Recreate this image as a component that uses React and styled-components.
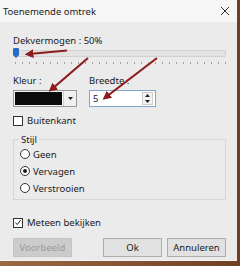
import React from "react";
import styled, { createGlobalStyle } from "styled-components";

const GlobalStyle = createGlobalStyle`
  html, body {
    margin: 0;
    padding: 0;
    background: #7c4d2e;
  }
  body {
    font-family: "Noto Sans", "Open Sans", sans-serif;
    color: #1a1a1a;
  }
`;

const ticks = Array.from({ length: 31 }, (_, i) => i);

const App = () => {
  return (
    <>
      <GlobalStyle />
      <Screen>
        <Window>
          <TitleBar>
            <Title>Toenemende omtrek</Title>
            <Close>
              <svg width="10" height="10" viewBox="0 0 10 10">
                <path d="M1 1 L9 9 M9 1 L1 9" stroke="#333" strokeWidth="1" />
              </svg>
            </Close>
          </TitleBar>
          <Body>
            <Label>Dekvermogen : 50%</Label>
            <Slider>
              <Track />
              <Thumb>
                <svg width="6" height="10" viewBox="0 0 6 10">
                  <path d="M0.5 1 Q0.5 0.5 1 0.5 L5 0.5 Q5.5 0.5 5.5 1 L5.5 7 L3 9.5 L0.5 7 Z" fill="#1e6fd0" stroke="#1456a8" strokeWidth="0.8" />
                </svg>
              </Thumb>
            </Slider>
            <Ticks>
              {ticks.map((t) => (
                <Tick key={t} />
              ))}
            </Ticks>
            <FieldRow>
              <Field>
                <Label>Kleur :</Label>
                <ColorPicker>
                  <Swatch />
                  <DropButton>
                    <svg width="5" height="3" viewBox="0 0 5 3">
                      <path d="M0 0 L5 0 L2.5 3 Z" fill="#222" />
                    </svg>
                  </DropButton>
                </ColorPicker>
              </Field>
              <Field>
                <Label>Breedte :</Label>
                <NumberBox>
                  <NumberValue>5</NumberValue>
                  <Spinner>
                    <SpinButton>
                      <svg width="5" height="3" viewBox="0 0 5 3">
                        <path d="M0 3 L5 3 L2.5 0 Z" fill="#222" />
                      </svg>
                    </SpinButton>
                    <SpinButton>
                      <svg width="5" height="3" viewBox="0 0 5 3">
                        <path d="M0 0 L5 0 L2.5 3 Z" fill="#222" />
                      </svg>
                    </SpinButton>
                  </Spinner>
                </NumberBox>
              </Field>
            </FieldRow>
            <CheckRow $top={7}>
              <CheckBox />
              <span>Buitenkant</span>
            </CheckRow>
            <Group>
              <Legend>Stijl</Legend>
              <RadioRow>
                <Radio />
                <span>Geen</span>
              </RadioRow>
              <RadioRow>
                <Radio $checked />
                <span>Vervagen</span>
              </RadioRow>
              <RadioRow>
                <Radio />
                <span>Verstrooien</span>
              </RadioRow>
            </Group>
            <CheckRow $top={16}>
              <CheckBox>
                <svg width="9" height="9" viewBox="0 0 9 9">
                  <path d="M1.5 4.5 L3.6 6.8 L7.6 1.6" fill="none" stroke="#222" strokeWidth="1.1" />
                </svg>
              </CheckBox>
              <span>Meteen bekijken</span>
            </CheckRow>
            <Buttons>
              <Button disabled>Voorbeeld</Button>
              <Spacer />
              <Button>Ok</Button>
              <Button>Annuleren</Button>
            </Buttons>
          </Body>
          <Arrows width="237" height="260" viewBox="0 0 237 260">
            <defs>
              <marker id="head" markerWidth="4" markerHeight="4" refX="2" refY="2" orient="auto" markerUnits="strokeWidth">
                <path d="M0 0 L4 2 L0 4 Z" fill="#8e1d1d" />
              </marker>
            </defs>
            <line x1="67" y1="50.5" x2="29" y2="54" stroke="#8e1d1d" strokeWidth="2.2" markerEnd="url(#head)" />
            <line x1="88" y1="58" x2="52" y2="89" stroke="#8e1d1d" strokeWidth="2.2" markerEnd="url(#head)" />
            <line x1="157" y1="58" x2="106" y2="97" stroke="#8e1d1d" strokeWidth="2.2" markerEnd="url(#head)" />
          </Arrows>
        </Window>
      </Screen>
    </>
  );
};

const Screen = styled.div`
  width: 240px;
  height: 266px;
  background: linear-gradient(90deg, #9a6a45, #6e3f22);
  overflow: hidden;
`;

const Window = styled.div`
  position: relative;
  width: 237px;
  height: 260px;
  background: #ebebeb;
  display: flex;
  flex-direction: column;
  box-shadow: 0 1px 0 #f4f4f4;
`;

const TitleBar = styled.div`
  height: 22px;
  background: #f6f6f6;
  display: flex;
  align-items: center;
  justify-content: space-between;
  padding: 0 5px 0 3px;
`;

const Title = styled.div`
  font-size: 9.5px;
  color: #222;
`;

const Close = styled.div`
  display: flex;
  width: 14px;
  justify-content: center;
`;

const Body = styled.div`
  flex: 1;
  display: flex;
  flex-direction: column;
  padding: 13px 11px 0 13px;
  font-size: 9.5px;
`;

const Label = styled.div`
  font-size: 9.5px;
  line-height: 11px;
  color: #1a1a1a;
`;

const Slider = styled.div`
  position: relative;
  height: 11px;
  margin-top: 2px;
  display: flex;
  align-items: center;
`;

const Track = styled.div`
  flex: 1;
  height: 5px;
  background: #e3e3e3;
  border: 1px solid #d2d2d2;
  border-radius: 1px;
`;

const Thumb = styled.div`
  position: absolute;
  left: 0;
  top: 0;
  display: flex;
`;

const Ticks = styled.div`
  display: flex;
  justify-content: space-between;
  padding: 0 0 0 2px;
  margin-top: 3px;
  height: 3px;
`;

const Tick = styled.div`
  width: 1px;
  height: 2px;
  background: #a0a0a0;
`;

const FieldRow = styled.div`
  display: flex;
  gap: 12px;
  margin-top: 10px;
`;

const Field = styled.div`
  display: flex;
  flex-direction: column;
  gap: 4px;
`;

const ColorPicker = styled.div`
  width: 64px;
  height: 17px;
  display: flex;
  border: 1px solid #9a9a9a;
  box-sizing: border-box;
  background: #f4f4f4;
`;

const Swatch = styled.div`
  flex: 1;
  margin: 1px;
  background: #0b0b0b;
`;

const DropButton = styled.div`
  width: 12px;
  display: flex;
  align-items: center;
  justify-content: center;
  background: #f0f0f0;
  border-left: 1px solid #cfcfcf;
`;

const NumberBox = styled.div`
  width: 67px;
  height: 17px;
  box-sizing: border-box;
  border: 1px solid #7ea6cf;
  background: #fff;
  display: flex;
  align-items: center;
`;

const NumberValue = styled.div`
  flex: 1;
  padding-left: 3px;
  font-size: 9.5px;
  border-left: 0;
`;

const Spinner = styled.div`
  width: 11px;
  height: 13px;
  margin-right: 2px;
  display: flex;
  flex-direction: column;
  border: 1px solid #cfcfcf;
  box-sizing: border-box;
`;

const SpinButton = styled.div`
  flex: 1;
  display: flex;
  align-items: center;
  justify-content: center;
  background: #f2f2f2;
`;

const CheckRow = styled.div`
  display: flex;
  align-items: center;
  gap: 4px;
  margin-top: ${(p) => p.$top}px;
  font-size: 9.5px;
`;

const CheckBox = styled.div`
  width: 10px;
  height: 10px;
  box-sizing: border-box;
  border: 1px solid #333;
  background: #fff;
  display: flex;
  align-items: center;
  justify-content: center;
`;

const Group = styled.div`
  position: relative;
  margin-top: 12px;
  border: 1px solid #d6d6d6;
  padding: 8px 0 5px 6px;
  display: flex;
  flex-direction: column;
  gap: 5px;
`;

const Legend = styled.div`
  position: absolute;
  top: -7px;
  left: 5px;
  padding: 0 2px;
  background: #ebebeb;
  font-size: 9.5px;
`;

const RadioRow = styled.div`
  display: flex;
  align-items: center;
  gap: 3px;
  font-size: 9.5px;
  height: 12px;
`;

const Radio = styled.div`
  width: 10px;
  height: 10px;
  border-radius: 50%;
  box-sizing: border-box;
  border: 1px solid #333;
  background: #fff;
  position: relative;
  &::after {
    content: "";
    display: ${(p) => (p.$checked ? "block" : "none")};
    position: absolute;
    left: 2px;
    top: 2px;
    width: 4px;
    height: 4px;
    border-radius: 50%;
    background: #1a1a1a;
  }
`;

const Buttons = styled.div`
  display: flex;
  gap: 5px;
  margin-top: 9px;
  padding-right: 0;
`;

const Spacer = styled.div`
  flex: 1;
`;

const Button = styled.button`
  width: 59px;
  height: 19px;
  padding: 0;
  font-family: "Noto Sans", "Open Sans", sans-serif;
  font-size: 9.5px;
  color: #1a1a1a;
  background: #e1e1e1;
  border: 1px solid #adadad;
  &:disabled {
    color: #9a9a9a;
    background: #cccccc;
    border-color: #c4c4c4;
  }
`;

const Arrows = styled.svg`
  position: absolute;
  left: 0;
  top: 0;
  pointer-events: none;
`;

export default App;
